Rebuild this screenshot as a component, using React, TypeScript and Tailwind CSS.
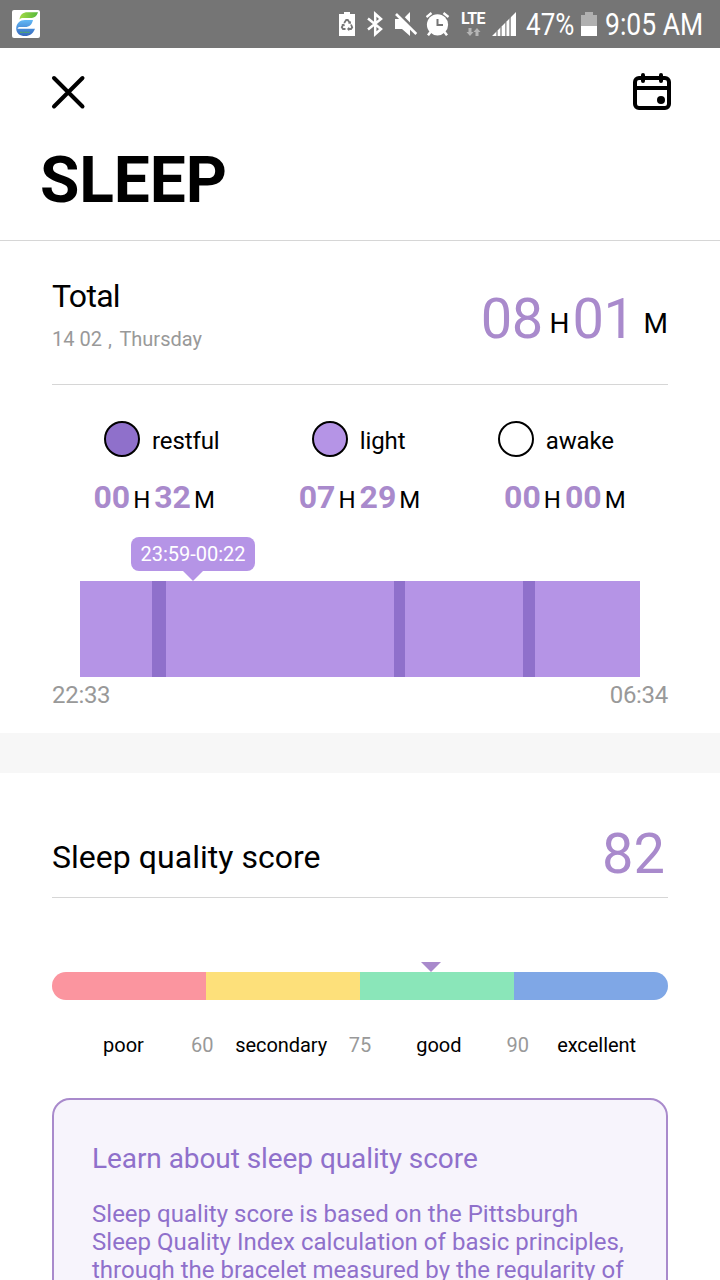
import React from 'react';

interface DurationProps {
  hours: string;
  minutes: string;
}

interface Segment {
  type: 'light' | 'restful';
  width: number;
}

const segments: Segment[] = [
  { type: 'light', width: 72 },
  { type: 'restful', width: 14 },
  { type: 'light', width: 228 },
  { type: 'restful', width: 11 },
  { type: 'light', width: 118 },
  { type: 'restful', width: 12 },
  { type: 'light', width: 105 },
];

const legend = [
  { label: 'restful', color: 'bg-[#8f70cb]' },
  { label: 'light', color: 'bg-[#b594e6]' },
  { label: 'awake', color: 'bg-white' },
];

const durations: DurationProps[] = [
  { hours: '00', minutes: '32' },
  { hours: '07', minutes: '29' },
  { hours: '00', minutes: '00' },
];

const scale = [
  { label: 'poor', muted: false },
  { label: '60', muted: true },
  { label: 'secondary', muted: false },
  { label: '75', muted: true },
  { label: 'good', muted: false },
  { label: '90', muted: true },
  { label: 'excellent', muted: false },
];

const AppLogo = () => (
  <svg className="w-7 h-7" viewBox="0 0 28 28">
    <defs>
      <linearGradient id="leaf" x1="0" y1="0" x2="1" y2="0">
        <stop offset="0" stopColor="#a5da45" />
        <stop offset="1" stopColor="#55b83c" />
      </linearGradient>
      <linearGradient id="wave" x1="0" y1="10" x2="0" y2="26" gradientUnits="userSpaceOnUse">
        <stop offset="0" stopColor="#62b8f5" />
        <stop offset="1" stopColor="#3568bd" />
      </linearGradient>
    </defs>
    <rect width="28" height="28" rx="2" fill="#fff" />
    <path d="M7.500 9.500C8 4.500 11 2.200 15.500 2.200H26C24.500 6.300 22.500 8 18 8H11.500C9.500 8 8.500 8.300 7.500 9.500Z" fill="url(#leaf)" />
    <path d="M4.200 18.500C4.500 13 8 10 13 10H21C20 14.500 17.500 17 13 17H9C7 17 6 17.300 5.500 18.700H23C21 23.500 18 26 13 26C8 26 4.300 23.500 4.200 18.500Z" fill="url(#wave)" />
    <path d="M8 22.300H18" stroke="#4fa76c" strokeWidth="1.200" strokeDasharray="2 .5" />
  </svg>
);

const RecycleBatteryIcon = () => (
  <svg className="w-4 h-6" viewBox="0 0 16 24">
    <path d="M5 0H11V2H16V24H0V2H5Z" fill="#fff" />
    <g fill="none" stroke="#757575" strokeWidth="1.800">
      <path d="M5.200 11L7.200 8H8.800L10.800 11" />
      <path d="M12 12.500L13.200 15.300L12 17H9.500" />
      <path d="M6.500 17H4L2.800 15.300L4.300 12.500" />
    </g>
    <path d="M9 11.500L12 11.800L11.800 9ZM10.200 14.800L8 17L10.200 19.200ZM2.300 12.800L5.200 11.600L5.900 14.200Z" fill="#757575" />
  </svg>
);

const BluetoothIcon = () => (
  <svg className="w-4 h-[26px]" viewBox="0 0 16 26" fill="none" stroke="#fff" strokeWidth="2.500">
    <path d="M1 7.500L14 18L8.200 23.200V2.800L14 8L1 18.500" />
  </svg>
);

const MuteIcon = () => (
  <svg className="w-6 h-6" viewBox="0 0 24 24">
    <path d="M1 7H7.500L16 15.500V24L8 17H1Z" fill="#fff" />
    <path d="M16 0V10.500L10.800 5.300Z" fill="#fff" />
    <path d="M2 2L22.300 22" stroke="#fff" strokeWidth="2.600" />
  </svg>
);

const AlarmIcon = () => (
  <svg className="w-6 h-6" viewBox="0 0 24 24">
    <path d="M0.500 5L5.500 1M22.500 5L17.500 1" stroke="#fff" strokeWidth="2.300" />
    <path d="M4.500 20L2 23.300M18.500 20L21 23.300" stroke="#fff" strokeWidth="2.500" />
    <circle cx="11.500" cy="12.800" r="10.600" fill="#fff" />
    <path d="M11.500 7V13H17" fill="none" stroke="#757575" strokeWidth="2" />
  </svg>
);

const LteIcon = () => (
  <div className="w-6 mr-px h-6 flex flex-col items-center">
    <span className="text-[16px] leading-[14px] font-bold tracking-[-0.6px]">LTE</span>
    <svg className="w-[15px] h-2 mt-[2px]" viewBox="0 0 15 8" fill="#b5b5b5">
      <path d="M2.500 0H5.500V4H7.500L4 8L0.500 4H2.500Z" />
      <path d="M11 0L14.500 4H12.500V8H9.500V4H7.500Z" />
    </svg>
  </div>
);

const SignalIcon = () => (
  <svg className="w-6 h-6" viewBox="0 0 24 24">
    <path d="M0 24L4.500 19.500V24ZM5.500 18.500L8.500 15.500V24H5.500ZM9.500 14.500L13 11V24H9.500ZM14.300 9.700L17.500 6.500V24H14.300ZM19 5L24 0V24H19Z" fill="#fff" />
    <path d="M4.500 19.500L5.500 18.500V24H4.500ZM8.500 15.500L9.500 14.500V24H8.500ZM13 11L14.300 9.700V24H13ZM17.500 6.500L19 5V24H17.500Z" fill="#a0a0a0" />
  </svg>
);

const BatteryIcon = () => (
  <svg className="w-4 h-6" viewBox="0 0 16 24">
    <path d="M4 0H12V3H16V14H0V3H4Z" fill="#b0b0b0" />
    <path d="M0 14H16V24H0Z" fill="#fff" />
  </svg>
);

const StatusBar = () => (
  <div className="h-12 shrink-0 bg-[#757575] text-white flex items-center pl-3">
    <AppLogo />
    <div className="flex items-center ml-[299px]">
      <RecycleBatteryIcon />
      <div className="ml-3"><BluetoothIcon /></div>
      <div className="ml-[11px]"><MuteIcon /></div>
      <div className="ml-2"><AlarmIcon /></div>
      <div className="ml-[11px]"><LteIcon /></div>
      <div className="ml-[6px]"><SignalIcon /></div>
    </div>
    <div className="w-12 ml-[10px] pt-[2px]">
      <span className="inline-block origin-left scale-x-[0.84] text-[31px] leading-8 whitespace-nowrap">47%</span>
    </div>
    <div className="ml-[7px]"><BatteryIcon /></div>
    <div className="w-[98px] ml-2 pt-[2px]">
      <span className="inline-block origin-left scale-x-[0.855] text-[31px] leading-8 whitespace-nowrap">9:05 AM</span>
    </div>
  </div>
);

const CloseIcon = () => (
  <svg className="w-8 h-8 overflow-visible" viewBox="0 0 32 32" stroke="#000" strokeWidth="4" strokeLinecap="round">
    <path d="M2 2L30.500 30.500M30.500 2L2 30.500" />
  </svg>
);

const CalendarIcon = () => (
  <svg className="w-[38px] h-[38px]" viewBox="0 0 38 38" fill="none" stroke="#000" strokeWidth="4" strokeLinecap="round">
    <rect x="2" y="5" width="34" height="30" rx="4" />
    <path d="M2 15H36" strokeLinecap="butt" />
    <path d="M10 2V8M28 2V8" />
    <circle cx="28" cy="27" r="4" fill="#000" stroke="none" />
  </svg>
);

const Duration: React.FC<DurationProps> = ({ hours, minutes }) => (
  <div className="flex justify-center items-baseline pr-px text-2xl leading-10">
    <span className="text-[32px] font-bold text-[#a98acc]">{hours}</span>
    <span className="ml-[3px]">H</span>
    <span className="ml-1 text-[32px] font-bold text-[#a98acc]">{minutes}</span>
    <span className="ml-[3px]">M</span>
  </div>
);

const SleepChart = () => (
  <div className="relative mx-7 mt-[61px] flex h-24">
    {segments.map((segment, index) => (
      <div
        key={index}
        className={segment.type === 'restful' ? 'bg-[#8f70cb]' : 'bg-[#b594e6]'}
        style={{ width: segment.width }}
      />
    ))}
    {/* Selected period */}
    <div className="absolute left-[51px] -top-11 flex flex-col items-center">
      <div className="w-[124px] h-[34px] rounded-lg bg-[#b594e6] text-center text-xl leading-[35px] text-white">
        23:59-00:22
      </div>
      <svg className="w-5 h-[10px]" viewBox="0 0 20 10">
        <path d="M0 0H20L10 10Z" fill="#b594e6" />
      </svg>
    </div>
  </div>
);

const App = () => {
  return (
    <div className="w-[720px] h-[1280px] overflow-hidden flex flex-col bg-white text-black font-['Roboto','Noto_Sans_CJK_SC',sans-serif]">
      <StatusBar />

      <header className="h-[193px] shrink-0 border-b border-[#d6d6d6] pt-[25px]">
        <div className="flex items-center justify-between pl-[52px] pr-[49px]">
          <CloseIcon />
          <CalendarIcon />
        </div>
        <h1 className="mt-[38px] pl-10 text-[64px] leading-none font-bold tracking-[-0.1px]">SLEEP</h1>
      </header>

      <section className="h-[492px] shrink-0 px-[52px]">
        <div className="h-36 flex justify-between border-b border-[#d6d6d6]">
          <div className="pt-[35px]">
            <h2 className="text-[32px] leading-10 tracking-[-0.7px]">Total</h2>
            <p className="mt-[11px] text-xl leading-6 text-[#999]">
              14 02 <span className="ml-[1px] mr-[3px]">,</span> Thursday
            </p>
          </div>
          <div className="flex items-start pt-[50px] text-[28px] leading-7">
            <span className="text-[56px] leading-none text-[#a98acc] tracking-[-0.5px]">08</span>
            <span className="mt-[19px] ml-[7px]">H</span>
            <span className="ml-[3px] text-[56px] leading-none text-[#a98acc] tracking-[-0.5px]">01</span>
            <span className="mt-[19px] ml-[9px]">M</span>
          </div>
        </div>

        <div className="mt-9 flex justify-between pl-[52px] pr-[54px]">
          {legend.map((item) => (
            <div key={item.label} className="flex h-9">
              <span className={`w-9 h-9 rounded-full border-2 border-black ${item.color}`} />
              <span className="ml-3 mt-[6px] text-2xl leading-7 tracking-[-0.1px]">{item.label}</span>
            </div>
          ))}
        </div>
        <div className="mt-5 grid grid-cols-3">
          {durations.map((item, index) => (
            <Duration key={index} hours={item.hours} minutes={item.minutes} />
          ))}
        </div>

        <SleepChart />
        <div className="mt-1 flex justify-between text-2xl leading-7 tracking-[-0.3px] text-[#999]">
          <span>22:33</span>
          <span>06:34</span>
        </div>
      </section>

      <div className="h-10 shrink-0 bg-[#f7f7f7]" />

      <section className="shrink-0 px-[52px]">
        <div className="h-[125px] flex justify-between items-start border-b border-[#d6d6d6]">
          <h2 className="mt-16 text-[32px] leading-10 tracking-[0.03px]">Sleep quality score</h2>
          <span className="mt-[53px] mr-[3px] text-[56px] leading-none text-[#a98acc]">82</span>
        </div>

        <div className="pt-16">
          <svg className="ml-[369px] w-5 h-[10px]" viewBox="0 0 20 10">
            <path d="M0 0H20L10 10Z" fill="#a98acc" />
          </svg>
          <div className="grid grid-cols-4 h-7 rounded-full overflow-hidden">
            <div className="bg-[#fb959f]" />
            <div className="bg-[#fde07a]" />
            <div className="bg-[#8ae6b9]" />
            <div className="bg-[#7fa7e6]" />
          </div>
        </div>

        <div className="mt-[33px] mx-8 grid grid-cols-7 text-xl leading-6 tracking-[-0.05px]">
          {scale.map((item) => (
            <div key={item.label} className="min-w-0 flex justify-center whitespace-nowrap">
              <span className={item.muted ? 'text-[#999]' : 'text-black'}>{item.label}</span>
            </div>
          ))}
        </div>

        <div className="mt-[41px] h-[300px] rounded-[18px] border-2 border-[#a98acc] bg-[#f7f4fc] px-[38px] pt-[43px] text-[#8f70cb]">
          <h3 className="text-[28px] leading-8 tracking-[-0.07px]">Learn about sleep quality score</h3>
          <p className="mt-[25px] text-2xl leading-7 tracking-[0.02px] whitespace-nowrap">
            Sleep quality score is based on the Pittsburgh<br />
            Sleep Quality Index calculation of basic principles,<br />
            through the bracelet measured by the regularity of
          </p>
        </div>
      </section>
    </div>
  );
};

export default App;
